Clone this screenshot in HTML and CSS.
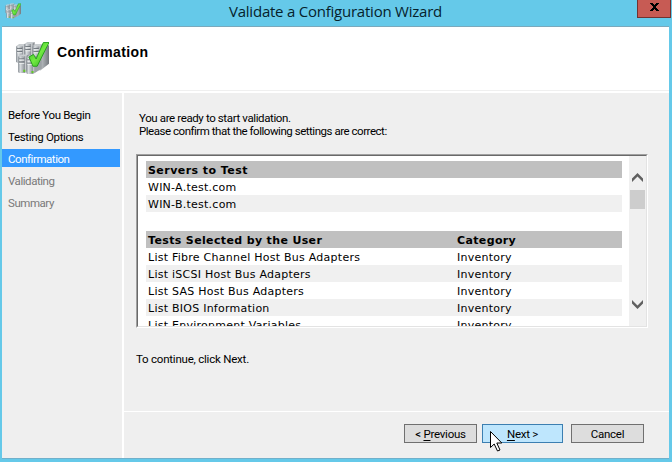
FILE: index.html
```html
<!DOCTYPE html>
<html lang="en">
<head>
<meta charset="utf-8">
<title>Validate a Configuration Wizard</title>
<link rel="stylesheet" href="styles.css">
</head>
<body>
<svg class="defs" width="0" height="0">
  <defs>
    <linearGradient id="metal" x1="0" x2="1"><stop offset="0" stop-color="#858b91"/><stop offset=".3" stop-color="#d8dcdf"/><stop offset="1" stop-color="#858a90"/></linearGradient>
    <linearGradient id="side" x1="0" x2="1"><stop offset="0" stop-color="#c5c9cc"/><stop offset="1" stop-color="#74797e"/></linearGradient>
    <linearGradient id="green" x1="0" y1="0" x2="1" y2="1"><stop offset="0" stop-color="#2bb51d"/><stop offset=".5" stop-color="#72ea42"/><stop offset="1" stop-color="#25a51a"/></linearGradient>
    <g id="tower">
      <path d="M0 2L3 0h7L8 2z" fill="#c9cdd0"/>
      <path d="M0 2h7v16H1L0 17z" fill="url(#metal)"/>
      <path d="M7 2l3-2v15l-3 3z" fill="url(#side)"/>
      <path d="M1 4.500h5M1 7.500h5" stroke="#5e656c"/>
      <path d="M1 5.500h5M1 8.500h5" stroke="#f1f3f4"/>
    </g>
    <symbol id="servers" viewBox="0 0 33 33">
      <use href="#tower" x="1" y="3"/><use href="#tower" x="9" y="1"/><use href="#tower" x="17" y="3"/>
      <path d="M24 9l9-5v18l-9 7z" fill="url(#side)"/>
      <use href="#tower" x="3" y="13"/><use href="#tower" x="11" y="14"/>
      <path d="M19 16h7v11l-7 4z" fill="#9da2a6"/>
      <path d="M8 29h2M16 30h2" stroke="#62c728" stroke-width="2"/>
      <path d="M13.500 15.500l4.500-2.500 2.500 4.500L27.500 1.500H33L21.500 24.500h-4z" fill="url(#green)" stroke="#249c1c" stroke-width=".9"/>
    </symbol>
  </defs>
</svg>
<div class="window">
  <header class="titlebar">
    <svg class="app-icon"><use href="#servers"/></svg>
    <span class="caption">Validate a Configuration Wizard</span>
    <div class="close"><svg width="9" height="8" viewBox="0 0 9 8" shape-rendering="crispEdges"><path d="M0 0h3v1h1v1h1V1h1V0h3v1H8v1H7v1H6v2h1v1h1v1h1v1H6V7H5V6H4v1H3v1H0V7h1V6h1V5h1V3H2V2H1V1H0z"/></svg></div>
  </header>
  <div class="client">
    <div class="heading">
      <svg class="page-icon"><use href="#servers"/></svg>
      <h1>Confirmation</h1>
    </div>
    <div class="body">
      <nav class="steps">
        <div class="step">Before You Begin</div>
        <div class="step">Testing Options</div>
        <div class="step active">Confirmation</div>
        <div class="step todo">Validating</div>
        <div class="step todo">Summary</div>
      </nav>
      <main>
        <section class="content">
          <p class="intro"><span class="ready">You are ready to start validation.</span><br>Please confirm that the following settings are correct:</p>
          <div class="report">
            <div class="report-inner">
              <div class="report-page">
                <div class="row head servers"><span>Servers to Test</span></div>
                <div class="row"><span>WIN-A.test.com</span></div>
                <div class="row alt"><span>WIN-B.test.com</span></div>
                <div class="row head second"><span>Tests Selected by the User</span><span>Category</span></div>
                <div class="row"><span>List Fibre Channel Host Bus Adapters</span><span>Inventory</span></div>
                <div class="row alt"><span>List iSCSI Host Bus Adapters</span><span>Inventory</span></div>
                <div class="row"><span>List SAS Host Bus Adapters</span><span>Inventory</span></div>
                <div class="row alt"><span>List BIOS Information</span><span>Inventory</span></div>
                <div class="row"><span>List Environment Variables</span><span>Inventory</span></div>
              </div>
              <div class="scrollbar">
                <svg class="up" width="11" height="9" viewBox="0 0 11 9"><path d="M0 5.500L5.500 0 11 5.500V9L5.500 3.500 0 9z" fill="#606060"/></svg>
                <div class="thumb"></div>
                <svg class="down" width="11" height="9" viewBox="0 0 11 9"><path d="M0 0l5.500 5.500L11 0v3.500L5.500 9 0 3.500z" fill="#606060"/></svg>
              </div>
            </div>
          </div>
          <p class="hint">To continue, click Next.</p>
        </section>
        <footer class="buttons">
          <div class="btn previous"><span>&lt; <u>P</u>revious</span></div>
          <div class="btn next"><span><u>N</u>ext &gt;</span></div>
          <div class="btn cancel"><span>Cancel</span></div>
        </footer>
      </main>
    </div>
  </div>
  <svg class="cursor" width="13" height="21" viewBox="0 0 13 21"><path d="M.5.500v16l3.700-3.500 3.300 7 2.500-1-3.200-7h5z" fill="#fff" stroke="#000"/></svg>
</div>
</body>
</html>
```
FILE: styles.css
```css
* { box-sizing: border-box; }
body { margin: 0; font: 11.5px/13px Roboto, "Liberation Sans", sans-serif; letter-spacing: -.45px; color: #000; overflow: hidden; }
.defs { position: absolute; }
.window { position: relative; width: 672px; height: 462px; background: #65c9e9; display: flex; flex-direction: column; padding: 0 3px 3px 2px; }
.titlebar { height: 26px; flex: none; display: flex; align-items: flex-start; }
.app-icon { width: 16px; height: 16px; margin: 3px 0 0 3px; }
.caption { flex: 1; margin-left: 208px; font: 15px/23px "Open Sans", sans-serif; white-space: nowrap; letter-spacing: -.23px; color: #06222c; }
.close { width: 34px; height: 18px; margin-right: -2px; background: #c75b54; border: 1px solid #713331; border-top: 0; display: flex; align-items: flex-start; justify-content: center; padding-top: 3px; }
.client { flex: 1; display: flex; flex-direction: column; border-top: 1px solid #7aa9bc; border-bottom: 1px solid #70b0cb; background: #fff; }
.heading { height: 66px; flex: none; display: flex; border-bottom: 2px solid #fff; box-shadow: inset 0 -1px #efefef; padding-left: 13px; }
.page-icon { width: 34px; height: 34px; margin-top: 14px; }
h1 { font: bold 14px/18px "Liberation Sans", sans-serif; margin: 16px 0 0 8px; white-space: nowrap; letter-spacing: .35px; }
.body { flex: 1; display: flex; gap: 2px; }
.steps { width: 120px; background: #efefef; display: flex; flex-direction: column; gap: 4px; padding-top: 12px; letter-spacing: -.33px; }
.step { height: 18px; padding: 4px 0 0 6px; width: 118px; white-space: nowrap; }
.step.active { background: #3399ff; color: #fff; letter-spacing: -.25px; }
.step.active, .step.todo { letter-spacing: -.45px; }
.step.todo { color: #797979; }
main { flex: 1; display: flex; flex-direction: column; gap: 1px; min-width: 0; }
.content { height: 318px; background: #efefef; padding: 19px 21px 0 12px; }
p { margin: 0; white-space: nowrap; }
.intro { padding-left: 3px; height: 42px; letter-spacing: -.47px; }
.ready { letter-spacing: -.38px; }
.report { height: 174px; border: 1px solid #fff; border-top-color: #a0a0a0; border-left-color: #a0a0a0; }
.report-inner { height: 172px; border: 1px solid #e3e3e3; border-top-color: #696969; border-left-color: #696969; background: #fff; display: flex; justify-content: space-between; overflow: hidden; }
.report-page { width: 484px; padding: 5px 0 0 8px; font: 11px/19px "DejaVu Sans", sans-serif; letter-spacing: .25px; overflow: hidden; }
.row { display: grid; grid-template-columns: 309px 1fr; height: 17px; padding-left: 2px; white-space: nowrap; }
.head { background: #c0c0c0; font-weight: bold; letter-spacing: .36px; }
.servers { letter-spacing: .45px; }
.second { margin-top: 19px; }
.alt { background: #f0f0f0; }
.scrollbar { width: 17px; background: #f0f0f0; display: flex; flex-direction: column; align-items: center; padding: 17px 0; }
.thumb { width: 15px; height: 19px; margin-top: 8px; background: #cdcdcd; }
.down { margin-top: auto; }
.hint { margin-top: 25px; letter-spacing: -.22px; }
.buttons { flex: 1; background: #efefef; display: flex; padding: 12px 25px 0 0; justify-content: flex-end; }
.btn { width: 73px; height: 19px; border: 1px solid #707070; background: #ddd; display: flex; justify-content: center; padding-top: 3px; letter-spacing: -.25px; }
.btn u { text-underline-offset: 2px; }
.next { width: 81px; margin: 0 8px 0 5px; background: #bee6fd; border-color: #3c7fb1; }
.cursor { position: absolute; left: 490px; top: 431px; }
```
